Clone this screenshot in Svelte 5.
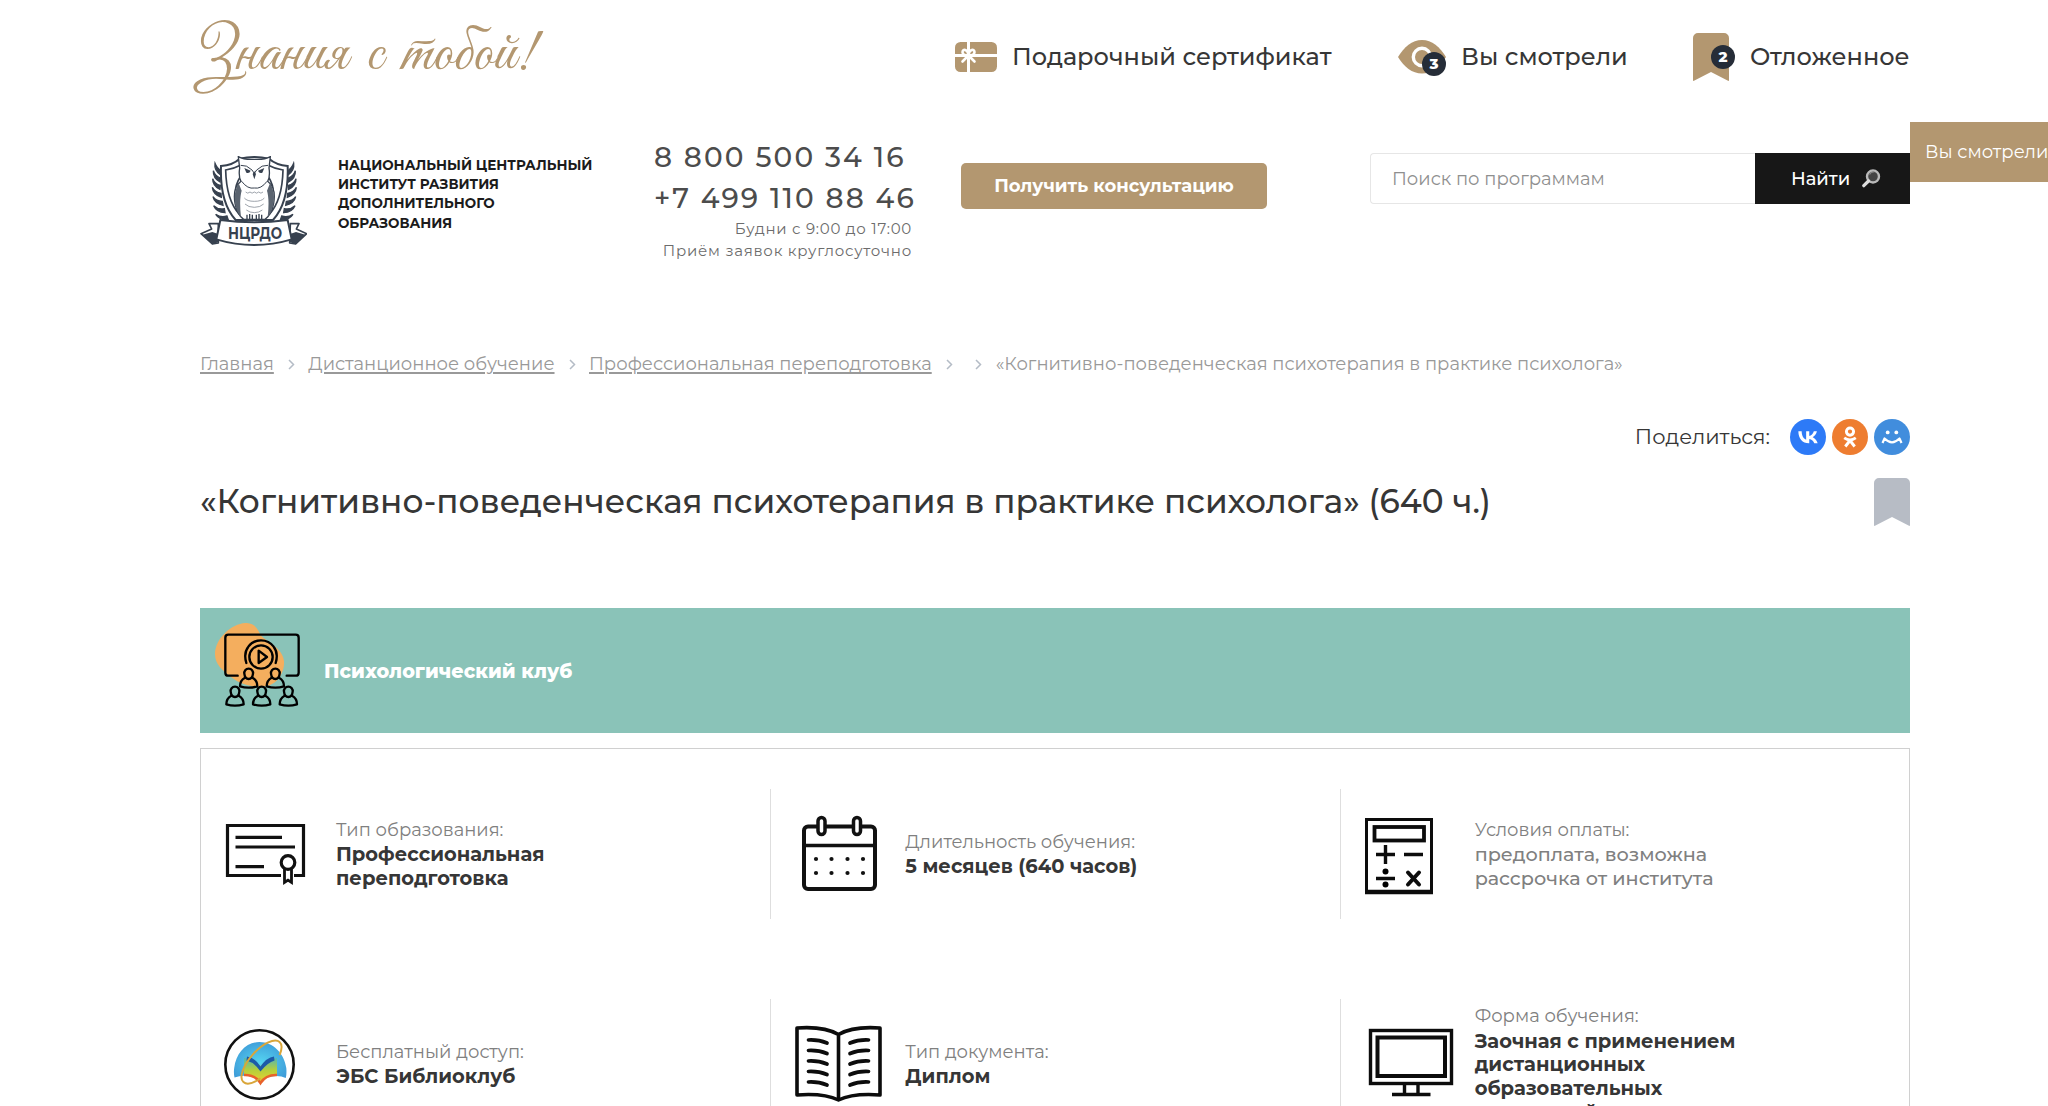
<script>
  const crumbs = ['Главная', 'Дистанционное обучение', 'Профессиональная переподготовка'];
  const cells = [
    { icon: 'certificate', label: 'Тип образования:', lines: ['Профессиональная', 'переподготовка'] },
    { icon: 'calendar', label: 'Длительность обучения:', lines: ['5 месяцев (640 часов)'] },
    { icon: 'calculator', label: 'Условия оплаты:', lines: ['предоплата, возможна', 'рассрочка от института'], light: true },
    { icon: 'globe', label: 'Бесплатный доступ:', lines: ['ЭБС Библиоклуб'] },
    { icon: 'book', label: 'Тип документа:', lines: ['Диплом'] },
    { icon: 'monitor', label: 'Форма обучения:', lines: ['Заочная с применением', 'дистанционных', 'образовательных', 'технологий'] }
  ];
  const lineRows = [0, 1, 2, 3, 4];
  const people = [[206, 266], [286, 266], [165, 320], [245, 320], [325, 320]];
</script>

<div class="page">
  <div class="topbar">
    <div class="slogan">Знания с тобой!</div>
    <nav class="topnav">
      <a class="toplink" href="#gift">
        <svg class="gift" width="42" height="30" viewBox="0 0 42 30">
          <rect width="42" height="30" rx="5.5" fill="#b39770" />
          <path d="M13.500 0v30M0 13.500h42" stroke="#fff" stroke-width="3" />
          <path d="M13.500 13.500c-3 .2-6-.6-6-3.200 0-3.600 5.200-3.600 6 3.200zM13.500 13.500c3 .2 6-.6 6-3.200 0-3.600-5.200-3.600-6 3.200zM13 14l-5.500 5.500M14 14l5.500 5.500" fill="none" stroke="#fff" stroke-width="2.600" stroke-linecap="round" />
        </svg>
        <span>Подарочный сертификат</span>
      </a>
      <a class="toplink" href="#seen">
        <span class="badged">
          <svg width="48" height="34" viewBox="0 0 48 34">
            <path d="M0 17C6 7 14 0 24 0s18 7 24 17c-6 10-14 16.500-24 16.500S6 27 0 17z" fill="#b39770" />
            <circle cx="24" cy="17" r="8.700" fill="none" stroke="#fff" stroke-width="3.400" />
          </svg>
          <b class="count eye-count">3</b>
        </span>
        <span>Вы смотрели</span>
      </a>
      <a class="toplink" href="#saved">
        <span class="badged">
          <svg width="36" height="48" viewBox="0 0 36 48">
            <path d="M5 0h26a5 5 0 0 1 5 5v42.200q0 1-1 .6L18 39 1 47.800q-1 .4-1-.6V5a5 5 0 0 1 5-5z" fill="#b39770" />
          </svg>
          <b class="count mark-count">2</b>
        </span>
        <span class="saved">Отложенное</span>
      </a>
    </nav>
  </div>

  <header class="header">
    <svg class="logo" width="107" height="91" viewBox="15 16 321 273">
      <g fill="#37414f">
        <path d="M72 56q-14-8-20-24-3 20 16 34zM68 76Q52 70 47 54q-1 22 20 34zM68 98q-17-4-23-20 0 22 22 32zM70 122q-19-3-26-18 2 21 27 30zM74 146q-18 0-28-14 4 20 30 26zM80 168q-18 4-32-9 8 19 34 21zM88 190q-18 6-34-5 12 18 38 17z" stroke="#37414f" stroke-width="4" transform="translate(8 6)" />
        <path d="M72 56q-14-8-20-24-3 20 16 34zM68 76Q52 70 47 54q-1 22 20 34zM68 98q-17-4-23-20 0 22 22 32zM70 122q-19-3-26-18 2 21 27 30zM74 146q-18 0-28-14 4 20 30 26zM80 168q-18 4-32-9 8 19 34 21zM88 190q-18 6-34-5 12 18 38 17z" stroke="#37414f" stroke-width="4" transform="translate(348 6) scale(-1 1)" />
      </g>
      <path d="M78 46q36-3 56-22 44-10 88 0 22 19 56 22 4 110-44 162H122Q74 156 78 46z" fill="#fff" stroke="#37414f" stroke-width="6" />
      <path d="M92 58q24-3 44-14v34q-20 30-14 70l12 44Q94 150 92 58zM264 58q-24-3-44-14v34q20 30 14 70l-12 44q40-42 42-134z" fill="none" stroke="#37414f" stroke-width="5" />
      <path d="M130 18q18 10 48 8 30 2 48-8-2 18-4 34 4 26-4 40 26 20 18 66-6 34-26 48h-64q-20-14-26-48-8-46 18-66-8-14-4-40-2-16-4-34z" fill="#fff" stroke="#37414f" stroke-width="4" />
      <path d="M131 98q-18 30-9 68 4 20 16 34-6-54 2-80zM225 98q18 30 9 68-4 20-16 34 6-54-2-80z" fill="#5b6470" />
      <path d="M137 44q18-2 34 14l7 10 7-10q16-16 34-14M140 92q18 24 38 20 20 4 38-20" fill="none" stroke="#37414f" stroke-width="3" />
      <path d="M152 124q6 7 13 0 6 7 13 0 7 7 13 0 7 7 13 0M148 142q8 10 30 10t30-10M150 160q10 10 28 10t28-10M154 178q10 8 24 8t24-8" fill="none" stroke="#8a919b" stroke-width="2.500" />
      <path d="M148 52l19 8q-4 10-13 6zM208 52l-19 8q4 10 13 6zM173 70l5-8 5 8-5 16z" fill="#37414f" />
      <path d="M156 192v20m8-22v22m8-20v20M184 192v20m8-22v22m8-20v20" stroke="#37414f" stroke-width="4" />
      <path d="M70 219H42l8 16-32 14 34 31 18-3zM286 219h26l-8 16 31 14-33 31-18-3z" fill="#fff" stroke="#37414f" stroke-width="5" stroke-linejoin="round" />
      <path d="M22 252l30-8 18 6v25l-18 6zM331 252l-28-8-18 6v25l18 6z" fill="#37414f" />
      <path d="M76 208q102 14 202 0l12 58q-112 34-226 0z" fill="#fff" stroke="#37414f" stroke-width="6" stroke-linejoin="round" />
      <text class="logo-text" x="180" y="264" text-anchor="middle" textLength="162" lengthAdjust="spacingAndGlyphs">НЦРДО</text>
    </svg>
    <div class="org">
      <div>НАЦИОНАЛЬНЫЙ ЦЕНТРАЛЬНЫЙ</div>
      <div>ИНСТИТУТ РАЗВИТИЯ</div>
      <div>ДОПОЛНИТЕЛЬНОГО</div>
      <div>ОБРАЗОВАНИЯ</div>
    </div>
    <div class="contacts">
      <div class="phone">8 800 500 34 16</div>
      <div class="phone">+7 499 110 88 46</div>
      <div class="hours">Будни с 9:00 до 17:00</div>
      <div class="hours">Приём заявок круглосуточно</div>
    </div>
    <button class="consult">Получить консультацию</button>
    <form class="search">
      <div class="field">Поиск по программам</div>
      <div class="find">
        <span>Найти</span>
        <svg width="19" height="19" viewBox="0 0 19 19">
          <circle cx="11" cy="7.500" r="6" fill="#444" stroke="#b9b9b9" stroke-width="2.400" />
          <path d="M7.500 5.500q1.500-3 5-2.500" fill="none" stroke="#888" stroke-width="1.200" />
          <path d="M6.500 12L1.800 16.700" stroke="#ddd" stroke-width="3.200" stroke-linecap="round" />
        </svg>
      </div>
    </form>
  </header>
  <div class="side-tab">Вы смотрели</div>

  <div class="crumbs">
    {#each crumbs as c}
      <a href="#crumb">{c}</a>
      <svg class="chev" width="7" height="11" viewBox="0 0 7 11"><path d="M1 1l4.500 4.500L1 10" /></svg>
    {/each}
    <svg class="chev last" width="7" height="11" viewBox="0 0 7 11"><path d="M1 1l4.500 4.500L1 10" /></svg>
    <span>«Когнитивно-поведенческая психотерапия в практике психолога»</span>
  </div>

  <div class="share">
    <span>Поделиться:</span>
    <svg width="36" height="36" viewBox="0 0 36 36">
      <circle cx="18" cy="18" r="18" fill="#2d7af7" />
      <path transform="translate(6 6.800)" fill="#fff" d="M12.900 17.500C6.300 17.500 2.500 13 2.350 5.500h3.300c.1 5.500 2.550 7.850 4.500 8.350V5.500h3.100v4.750c1.900-.2 3.900-2.350 4.570-4.750h3.100c-.52 2.900-2.700 5.050-4.250 5.950 1.550.73 4.050 2.650 5 6.050h-3.400c-.73-2.300-2.550-4.050-5.020-4.300v4.300z" />
    </svg>
    <svg width="36" height="36" viewBox="0 0 36 36">
      <circle cx="18" cy="18" r="18" fill="#ee7d30" />
      <g fill="none" stroke="#fff" stroke-width="2.900">
        <circle cx="18" cy="12.600" r="3.600" />
        <path d="M12.200 18.900q5.800 4 11.600 0M18 21.500l-4.700 6M18 21.500l4.700 6" />
      </g>
    </svg>
    <svg width="36" height="36" viewBox="0 0 36 36">
      <circle cx="18" cy="18" r="18" fill="#418ddd" />
      <circle cx="13.700" cy="13.400" r="1.900" fill="#fff" />
      <circle cx="22.300" cy="13.400" r="1.900" fill="#fff" />
      <path d="M8.500 24l2-4.500q7.500 7.500 15 0l2 4.500" fill="none" stroke="#fff" stroke-width="2.200" stroke-linejoin="round" />
    </svg>
  </div>

  <div class="title-row">
    <h1>«Когнитивно-поведенческая психотерапия в практике психолога» (640 ч.)</h1>
    <svg width="36" height="48" viewBox="0 0 36 48">
      <path d="M5 0h26a5 5 0 0 1 5 5v42.200q0 1-1 .6L18 39 1 47.800q-1 .4-1-.6V5a5 5 0 0 1 5-5z" fill="#b7bcc5" />
    </svg>
  </div>

  <div class="banner">
    <svg width="85" height="84" viewBox="105 99 255 252">
      <path d="M196 99c24-1 36 14 44 33 10 20 70 40 72 82 2 34-22 72-58 75-34 4-72-6-98-26-30-22-51-40-51-70 0-48 50-92 91-94z" fill="#f4ae5e" />
      <g fill="none" stroke="#000" stroke-width="7" stroke-linecap="round">
        <path d="M173 257h-28q-9 0-9-9V143q0-9 9-9h202q9 0 9 9v105q0 9-9 9h-27" />
        <circle cx="243" cy="201" r="35" />
        <path d="M199 219q-9-30 6-49 14-19 38-19t38 19q15 19 6 49" />
        <path d="M236 182v37l25-18z" stroke-linejoin="round" />
        {#each people as [x, y]}
          <g transform="translate({x} {y})">
            <path d="M0-30c9 0 14 7 13 15-1 9-6 16-13 16s-12-7-13-16c-1-8 4-15 13-15z" />
            <path d="M-11-3q-15 8-15 26 26 8 52 0 0-18-15-26" stroke-linejoin="round" />
          </g>
        {/each}
      </g>
    </svg>
    <span>Психологический клуб</span>
  </div>

  <div class="facts">
    {#each cells as cell}
      <div class="cell">
        <svg class="fact-icon" width="96" height="90" viewBox="0 0 96 90">
          {#if cell.icon === 'certificate'}
            <g fill="none" stroke="#111" stroke-width="3.200">
              <path d="M60 66.500H6.500v-50H82.500v50H73" />
              <path d="M14.500 28.300H61M14.500 38H74M14.500 57.700H43" />
              <ellipse cx="67" cy="53.500" rx="6.800" ry="6.800" />
              <path d="M63.500 60v13.500l3.500-2.300 3.500 2.300V60" stroke-width="2.800" />
            </g>
          {:else if cell.icon === 'calendar'}
            <g fill="none" stroke="#111" stroke-width="4">
              <rect x="14" y="17.500" width="71" height="62.500" rx="4" />
              <path d="M14 36.500h71" stroke-width="3.500" />
              <rect x="28" y="8.500" width="7" height="17" rx="3.500" fill="#fff" stroke-width="3.500" />
              <rect x="63.500" y="8.500" width="7" height="17" rx="3.500" fill="#fff" stroke-width="3.500" />
            </g>
            {#each [26, 41.500, 57.500, 73] as x}
              <circle cx={x} cy="50" r="2.100" fill="#111" />
              <circle cx={x} cy="64" r="2.100" fill="#111" />
            {/each}
          {:else if cell.icon === 'calculator'}
            <g fill="none" stroke="#0c0c0c" stroke-width="3">
              <rect x="6.500" y="10.500" width="65" height="73" />
              <path d="M5 83h68" stroke-width="4.500" />
              <rect x="14.500" y="18" width="49.500" height="13.500" stroke-width="3.800" />
              <path d="M16 45.500h19M25.500 36v19M44 45.500h19M16 69.500h19" stroke-width="3.400" />
              <path d="M48 63.500l11 12M59 63.500l-11 12" stroke-width="4" stroke-linecap="round" />
            </g>
            <circle cx="25.500" cy="62.500" r="3" /><circle cx="25.500" cy="75.500" r="3" />
          {:else if cell.icon === 'globe'}
            <defs>
              <radialGradient id="sky" cx="50%" cy="55%" r="60%">
                <stop offset="0" stop-color="#55d6f2" /><stop offset="1" stop-color="#3e9bd8" />
              </radialGradient>
              <linearGradient id="pages" x1="0" y1="0" x2="0" y2="1">
                <stop offset="0" stop-color="#55b6b4" /><stop offset=".5" stop-color="#b4cf3c" /><stop offset="1" stop-color="#e9d32f" />
              </linearGradient>
            </defs>
            <circle cx="38.500" cy="45.500" r="34.200" fill="#fff" stroke="#111" stroke-width="2.600" />
            <path d="M13.500 58.500a27 27 0 0 1-.3-9.500C15 34 25 23 38.500 23S63 34 65.300 49q.5 6-.5 10-10-5-25 2-14-7-26.300-2.500z" fill="url(#sky)" />
            <path d="M23 39q10 .5 16.500 8Q46 39.500 56 39v17q-10 .5-16.500 7-6-6-16.500-7z" fill="url(#pages)" />
            <path d="M26 37.500q8 1 13.500 10Q45.500 38.500 53 37.500l.5 4q-7 2-14 11-6-9-14-11z" fill="#1d5aa8" />
            <path d="M23 56q11-.5 16.500 8Q45 55.500 56 56" fill="none" stroke="#e8622b" stroke-width="2.600" />
            <ellipse cx="40.500" cy="43" rx="27" ry="11.500" transform="rotate(-48 40.500 43)" fill="none" stroke="#d9a63a" stroke-width="2" stroke-dasharray="96 30" stroke-dashoffset="-44" />
          {:else if cell.icon === 'book'}
            <g fill="none" stroke="#0c0c0c" stroke-width="3.600">
              <path d="M48.500 15.500Q34 7 7 9v67q27-2 41.500 5Q63 74 90 76V9Q63 7 48.500 15.500zM48.500 15.500V81" stroke-linejoin="round" />
              {#each lineRows as r}
                <path d="M18.500 {21 + r * 10.500}q10-.5 18.500 3M78.500 {21 + r * 10.500}q-10-.5-18.500 3" stroke-width="3.700" stroke-linecap="round" />
              {/each}
            </g>
          {:else}
            <g fill="none" stroke="#0c0c0c" stroke-width="3.400">
              <rect x="10.500" y="11.500" width="81" height="53" />
              <rect x="17.500" y="18.500" width="67.500" height="38.500" stroke-width="4" />
              <path d="M44.500 64v10.500M58 64v10.500M32 75.500h38.500" />
            </g>
          {/if}
        </svg>
        <div class="fact">
          <div class="label">{cell.label}</div>
          {#each cell.lines as line}
            <div class="value" class:light={cell.light}>{line}</div>
          {/each}
        </div>
      </div>
    {/each}
  </div>
</div>

<style>
  :global(body) { margin: 0; background: #fff; overflow: hidden; }
  .page {
    box-sizing: border-box;
    position: relative;
    width: 2048px;
    height: 1106px;
    padding: 0 138px 0 200px;
    overflow: hidden;
    font-family: Montserrat, Inter, sans-serif;
    color: #363636;
  }
  a { color: inherit; text-decoration: none; }
  svg { display: block; flex: none; }
  .topbar { display: flex; justify-content: space-between; height: 114px; }
  .slogan {
    margin-left: -9px;
    padding-top: 15px;
    font: 62px/80px "Great Vibes", "Marck Script", "Liberation Serif", serif;
    word-spacing: 8px;
    color: #b39770;
    white-space: nowrap;
  }
  .topnav { display: grid; grid-template-columns: 443px 295px 217px; align-items: center; height: 114px; }
  .toplink { display: flex; align-items: center; gap: 15px; font-size: 24px; font-weight: 500; line-height: 30px; white-space: nowrap; }
  .saved { margin-left: 6px; }
  .badged { position: relative; }
  .count {
    position: absolute;
    width: 24px;
    height: 24px;
    border-radius: 50%;
    background: #262d38;
    color: #fff;
    font-size: 15px;
    font-weight: 800;
    line-height: 24px;
    text-align: center;
  }
  .eye-count { right: 0; bottom: -2px; }
  .mark-count { right: -6px; top: 12px; }

  .header { display: grid; grid-template-columns: 138px 315px 308px 409px 540px; align-items: start; height: 238px; }
  .logo { margin-top: 42px; }
  .logo-text { font: 700 46px Montserrat, Inter, sans-serif; fill: #37414f; }
  .org { margin-top: 42px; font-size: 13.5px; font-weight: 700; line-height: 19.2px; color: #1b1b1b; white-space: nowrap; }
  .contacts { width: 260px; margin-top: 23px; white-space: nowrap; }
  .phone { margin-left: 1px; font-size: 28px; font-weight: 500; line-height: 41px; letter-spacing: 2.15px; color: #4c4c4c; }
  .hours { position: relative; top: -1px; margin-right: 1px; font-size: 15px; line-height: 22px; letter-spacing: 0.75px; text-align: right; color: #6c6c6c; }
  .consult {
    width: 306px;
    height: 46px;
    margin-top: 49px;
    padding: 0;
    border: 0;
    border-radius: 5px;
    background: #b39770;
    color: #fff;
    font: 700 18px/46px Montserrat, Inter, sans-serif;
  }
  .search { display: flex; margin-top: 39px; height: 51px; }
  .field {
    box-sizing: border-box;
    width: 385px;
    padding-left: 21px;
    border: 1px solid #e6e6e6;
    border-right: 0;
    border-radius: 4px 0 0 4px;
    font-size: 18px;
    line-height: 50px;
    color: #8f8f8f;
  }
  .find { display: flex; align-items: center; gap: 12px; box-sizing: border-box; width: 155px; padding-left: 36px; background: #171717; color: #fff; font-size: 18px; font-weight: 500; }
  .side-tab {
    position: absolute;
    left: 1910px;
    top: 122px;
    width: 138px;
    height: 60px;
    box-sizing: border-box;
    padding-left: 15px;
    background: #b39770;
    color: #fff;
    font-size: 18px;
    font-weight: 400;
    line-height: 60px;
    white-space: nowrap;
  }

  .crumbs { display: flex; align-items: center; height: 24px; font-size: 18px; line-height: 24px; color: #999; white-space: nowrap; }
  .crumbs a { text-decoration: underline; text-decoration-thickness: 2px; text-underline-offset: 2px; }
  .chev { margin: 0 13.5px 0 14px; fill: none; stroke: #b4bcc6; stroke-width: 1.5; }
  .chev.last { margin-left: 9px; }

  .share { display: flex; align-items: center; justify-content: flex-end; gap: 6px; height: 36px; margin-top: 43px; font-size: 21px; }
  .share span { margin: -2px 14px 0 0; }
  .title-row { display: flex; align-items: center; justify-content: space-between; height: 48px; margin-top: 23px; }
  h1 { margin: -2px 0 0; font-size: 32.81px; font-weight: 500; line-height: 46px; white-space: nowrap; }

  .banner { display: flex; height: 125px; margin-top: 82px; padding-left: 15px; background: #8ac3b8; color: #fff; font-size: 19.2px; font-weight: 800; line-height: 126px; }
  .banner svg { margin-top: 15px; }
  .banner span { margin-left: 24px; }

  .facts {
    display: grid;
    grid-template-columns: repeat(3, 1fr);
    grid-auto-rows: 130px;
    row-gap: 80px;
    height: 420px;
    box-sizing: border-box;
    margin-top: 15px;
    padding-top: 40px;
    border: 1px solid #d0d0d0;
  }
  .cell { display: flex; align-items: center; padding-left: 20px; }
  .cell:not(:nth-child(3n + 1)) { padding-left: 19px; border-left: 1px solid #dedede; }
  .fact { margin-left: 19px; line-height: 23.7px; white-space: nowrap; }
  .label { padding-top: 1.6px; margin-bottom: 1px; font-size: 18px; color: #808080; }
  .value { font-size: 19.5px; font-weight: 700; }
  .value.light { font-size: 19.2px; font-weight: 500; color: #808080; }
</style>
